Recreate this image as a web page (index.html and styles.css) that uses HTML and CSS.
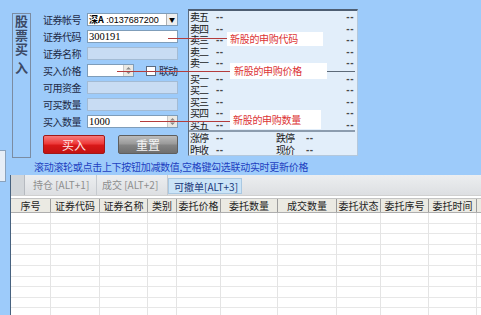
FILE: index.html
```html
<!DOCTYPE html>
<html lang="zh">
<head>
<meta charset="utf-8">
<title>股票买入</title>
<link rel="stylesheet" href="styles.css">
</head>
<body>
<div class="top">
  <div class="side"><span>股</span><span>票</span><span>买</span><span class="last">入</span></div>
  <div class="form">
    <div class="row"><label>证券帐号</label><div class="select"><span class="sel-text"><b>深A</b> :0137687200</span><span class="drop">▼</span></div></div>
    <div class="row"><label>证券代码</label><div class="input"><span class="val">300191</span></div></div>
    <div class="row"><label>证券名称</label><div class="input dis"></div></div>
    <div class="row"><label>买入价格</label><div class="input short"><span class="val"></span><span class="spin"><svg width="7" height="9" viewBox="0 0 7 9"><path d="M1 3.5h5L3.5 1z M1 5.5h5L3.5 8z" fill="#8a8a8a"/></svg></span></div><span class="check"></span><span class="ck-label">联动</span></div>
    <div class="row"><label>可用资金</label><div class="input dis"></div></div>
    <div class="row"><label>可买数量</label><div class="input dis"></div></div>
    <div class="row"><label>买入数量</label><div class="input"><span class="val">1000</span><span class="spin"><svg width="7" height="9" viewBox="0 0 7 9"><path d="M1 3.5h5L3.5 1z M1 5.5h5L3.5 8z" fill="#8a8a8a"/></svg></span></div></div>
    <div class="buttons"><span class="btn buy">买入</span><span class="btn reset">重置</span></div>
  </div>
  <div class="quote">
    <div class="q"><span class="ql">卖五</span><span class="qd">--</span><span class="qr">--</span></div>
    <div class="q"><span class="ql">卖四</span><span class="qd">--</span><span class="qr">--</span></div>
    <div class="q"><span class="ql">卖三</span><span class="qd">--</span><span class="qr">--</span></div>
    <div class="q"><span class="ql">卖二</span><span class="qd">--</span><span class="qr">--</span></div>
    <div class="q"><span class="ql">卖一</span><span class="qd">--</span><span class="qr">--</span></div>
    <div class="q gapq"><span class="ql">买一</span><span class="qd">--</span><span class="qr">--</span></div>
    <div class="q"><span class="ql">买二</span><span class="qd">--</span><span class="qr">--</span></div>
    <div class="q"><span class="ql">买三</span><span class="qd">--</span><span class="qr">--</span></div>
    <div class="q"><span class="ql">买四</span><span class="qd">--</span><span class="qr">--</span></div>
    <div class="q"><span class="ql">买五</span><span class="qd">--</span><span class="qr">--</span></div>
    <div class="sep"></div>
    <div class="q"><span class="ql">涨停</span><span class="qd wide">--</span><span class="ql2">跌停</span><span class="qd">--</span></div>
    <div class="q"><span class="ql">昨收</span><span class="qd wide">--</span><span class="ql2">现价</span><span class="qd">--</span></div>
  </div>
</div>
<div class="hint">滚动滚轮或点击上下按钮加减数值,空格键勾选联动实时更新价格</div>
<div class="lower">
  <div class="tabs">
    <span class="tab0"></span>
    <span class="tab t1">持仓 [ALT+1]</span>
    <span class="tab t2">成交 [ALT+2]</span>
    <span class="tab t3 active">可撤单[ALT+3]</span>
  </div>
  <div class="thead">
    <span class="th c1">序号</span><span class="th c2">证券代码</span><span class="th c3">证券名称</span><span class="th c4">类别</span><span class="th c5">委托价格</span><span class="th c6">委托数量</span><span class="th c7">成交数量</span><span class="th c8">委托状态</span><span class="th c9">委托序号</span><span class="th c10">委托时间</span><span class="th c11"></span>
  </div>
  <div class="tbody">
    <span class="td c1"></span><span class="td c2"></span><span class="td c3"></span><span class="td c4"></span><span class="td c5"></span><span class="td c6"></span><span class="td c7"></span><span class="td c8"></span><span class="td c9"></span><span class="td c10"></span><span class="td c11"></span>
  </div>
</div>

<div class="edge"></div>
<div class="ann-line l1"></div>
<div class="ann-box b1">新股的申购代码</div>
<div class="ann-line l2"></div>
<div class="ann-box b2">新股的申购价格</div>
<div class="ann-line l2b"></div>
<div class="ann-line l3"></div>
<div class="ann-box b3">新股的申购数量</div>
</body>
</html>
```

FILE: styles.css
```css
html, body {
  margin: 0;
  padding: 0;
}
body {
  width: 481px;
  height: 315px;
  overflow: hidden;
  position: relative;
  background: #9dcbfa;
  font-family: "Noto Sans CJK SC", "Noto Sans", sans-serif;
  font-size: 10px;
  color: #1f2b45;
}

.top {
  display: flex;
  height: 158px;
}

.side {
  margin: 13px 0 0 12px;
  width: 17px;
  height: 143px;
  border: 1px solid #7b8ca2;
  display: flex;
  flex-direction: column;
  align-items: center;
  font-size: 13px;
  line-height: 14px;
  font-weight: 700;
  color: #3c4a66;
}
.side span { display: block; height: 14px; }
.side .last { margin-top: 5px; }

.form {
  margin-left: 12px;
  width: 135px;
  padding-top: 13px;
  display: flex;
  flex-direction: column;
  gap: 4px;
}
.row {
  display: flex;
  align-items: center;
  height: 13px;
  white-space: nowrap;
}
.row label {
  width: 44px;
  flex: none;
  line-height: 13px;
  letter-spacing: -0.5px;
  white-space: nowrap;
  color: #1d2a46;
}
.input {
  width: 91px;
  flex: none;
  height: 13px;
  box-sizing: border-box;
  border: 1px solid #7f9db9;
  background: #fff;
  display: flex;
}
.input.dis {
  background: #c8dcf3;
  border-color: #a3bbd4;
}
.input.short { width: 47px; }
.val {
  flex: 1;
  padding-left: 1px;
  font-family: "Liberation Serif", serif;
  font-size: 10.5px;
  line-height: 11px;
  color: #000;
}
.spin {
  width: 9px;
  background: #ebe9e3;
  border-left: 1px solid #c8c8c8;
  display: flex;
  align-items: center;
  justify-content: center;
}
.check {
  flex: none;
  margin-left: 12px;
  width: 10px;
  height: 10px;
  box-sizing: border-box;
  border: 1px solid #5b6b80;
  background: #fff;
}
.ck-label {
  flex: none;
  margin-left: 3px;
  line-height: 13px;
  letter-spacing: -1px;
  white-space: nowrap;
  color: #1d2a46;
}
.select {
  width: 91px;
  flex: none;
  height: 13px;
  box-sizing: border-box;
  border: 1px solid #7f9db9;
  background: #fff;
  display: flex;
}
.sel-text {
  flex: 1;
  padding-left: 1px;
  font-family: "Liberation Sans", sans-serif;
  font-size: 9px;
  line-height: 11px;
  color: #000;
  white-space: nowrap;
  overflow: hidden;
}
.sel-text b {
  font-family: "Noto Sans CJK SC", sans-serif;
  font-size: 9px;
}
.drop {
  width: 10px;
  flex: none;
  border-left: 1px solid #b0b0b0;
  background: #eeeeee;
  font-size: 6px;
  line-height: 11px;
  text-align: center;
  color: #000;
}

.buttons {
  margin-top: 3px;
  display: flex;
}
.btn {
  height: 19px;
  box-sizing: border-box;
  border-radius: 2px;
  text-align: center;
  font-size: 12px;
  line-height: 17px;
  color: #fff;
}
.buy {
  width: 62px;
  border: 1px solid #a01818;
  background: linear-gradient(#f77a7a 0%, #ee3a3a 45%, #d81818 55%, #c41212 100%);
  color: #ffe8e8;
}
.reset {
  width: 60px;
  margin-left: 13px;
  border: 1px solid #5e5e5e;
  background: linear-gradient(#bcbcbc 0%, #9a9a9a 45%, #838383 55%, #6f6f6f 100%);
  color: #f4f4f4;
}

.quote {
  margin: 9px 0 0 10px;
  width: 170px;
  height: 147px;
  box-sizing: border-box;
  background: #e2eefa;
  border-top: 2px solid #4e5e72;
  border-left: 1px solid #5b6a7c;
  border-right: 1px solid #b4c8dc;
  border-bottom: 1px solid #b4c8dc;
  display: flex;
  flex-direction: column;
}
.q {
  display: flex;
  height: 11.5px;
  line-height: 11.5px;
  padding: 0 3px 0 1px;
  white-space: nowrap;
}
.gapq { margin-top: 4px; }
.ql {
  width: 26px;
  letter-spacing: -1px;
  color: #1a1a1a;
}
.ql2 {
  width: 30px;
  letter-spacing: -1px;
  color: #1a1a1a;
}
.qd {
  font-family: "Liberation Sans", sans-serif;
  font-weight: 700;
  color: #4a4a4a;
  letter-spacing: 0.5px;
}
.qd.wide { width: 60px; }
.qr {
  margin-left: auto;
  font-family: "Liberation Sans", sans-serif;
  font-weight: 700;
  color: #4a4a4a;
  letter-spacing: 0.5px;
}
.sep {
  height: 2px;
  margin-right: 2px;
  background: #8c9cae;
}

.hint {
  margin: 2px 0 1px 34px;
  height: 14px;
  line-height: 14px;
  color: #1d3fc0;
  letter-spacing: -0.3px;
  white-space: nowrap;
}

.lower {
  margin-left: 10px;
  height: 140px;
  border-left: 1px solid #47627f;
  background: #fff;
  display: flex;
  flex-direction: column;
}
.tabs {
  height: 21px;
  flex: none;
  display: flex;
  background: linear-gradient(#eceef0, #dddfe2);
  border-bottom: 1px solid #d0d0d0;
  box-sizing: border-box;
}
.tab0 {
  width: 13px;
  background: #d2d6da;
  border-right: 1px solid #b6bac0;
}
.tab {
  box-sizing: border-box;
  line-height: 20px;
  color: #8e8e8e;
  border-right: 1px solid #c6cacf;
  white-space: nowrap;
}
.t1 { width: 72px; padding-left: 8px; }
.t2 { width: 71px; padding-left: 5px; }
.t3 { width: 74px; padding-left: 5px; }
.tab.active {
  margin-top: 3px;
  line-height: 15px;
  height: 16px;
  background: #cbe4f7;
  color: #1b3a7a;
  border: 1px solid #a9c8e2;
}

.thead {
  margin-top: 2px;
  height: 15px;
  flex: none;
  box-sizing: border-box;
  display: flex;
  background: #ebeae3;
  border-top: 1px solid #c4c4c4;
  border-bottom: 1px solid #aeaeae;
}
.th {
  box-sizing: border-box;
  border-right: 1px solid #9c9c9c;
  text-align: center;
  line-height: 13px;
  color: #1e1e1e;
  white-space: nowrap;
  overflow: hidden;
}
.tbody {
  flex: 1;
  display: flex;
  background: repeating-linear-gradient(to bottom, #fff 0, #fff 9.6px, #e7e7e7 9.6px, #e7e7e7 10.6px);
}
.td {
  box-sizing: border-box;
  border-right: 1px solid #e4e4e4;
}
.c1 { width: 40px; }
.c2 { width: 49px; }
.c3 { width: 48px; }
.c4 { width: 29px; }
.c5 { width: 44px; }
.c6 { width: 57px; }
.c7 { width: 59px; }
.c8 { width: 44px; }
.c9 { width: 48px; }
.c10 { width: 48px; }
.c11 { flex: 1; border-right: none; }

.edge {
  position: absolute;
  left: 0;
  top: 150px;
  width: 6px;
  height: 32px;
  box-sizing: border-box;
  background: #e6eef7;
  border: 1px solid #8aa2bc;
  border-left: none;
}

.ann-line {
  position: absolute;
  height: 1px;
  background: #b43c3c;
}
.l1 { left: 168px; top: 38px; width: 60px; }
.l2 { left: 117px; top: 71px; width: 114px; }
.l2b { left: 327px; top: 71px; width: 28px; background: #5d6a78; }
.l3 { left: 140px; top: 121px; width: 90px; }

.ann-box {
  position: absolute;
  background: #fff;
  color: #dc3434;
  font-size: 10px;
  letter-spacing: -0.3px;
  white-space: nowrap;
  box-sizing: border-box;
}
.b1 { left: 227px; top: 32px; width: 96px; height: 14px; line-height: 14px; padding-left: 3px; }
.b2 { left: 230px; top: 63px; width: 97px; height: 16px; line-height: 16px; padding-left: 4px; }
.b3 { left: 230px; top: 110px; width: 91px; height: 19px; line-height: 19px; padding-left: 3px; }
```
